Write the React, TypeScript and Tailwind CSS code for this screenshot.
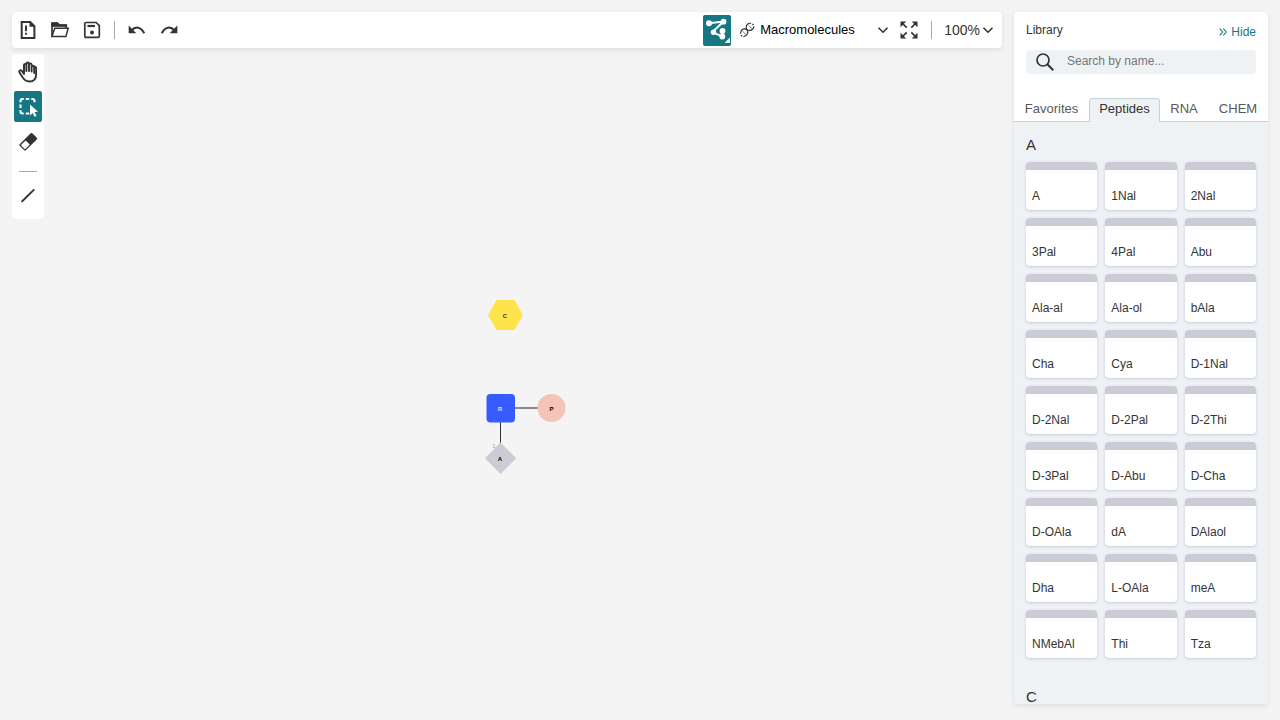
import type { ReactNode } from "react";

const peptides = [
  "A", "1Nal", "2Nal", "3Pal", "4Pal", "Abu", "Ala-al", "Ala-ol", "bAla",
  "Cha", "Cya", "D-1Nal", "D-2Nal", "D-2Pal", "D-2Thi", "D-3Pal", "D-Abu", "D-Cha",
  "D-OAla", "dA", "DAlaol", "Dha", "L-OAla", "meA", "NMebAl", "Thi", "Tza",
];

const tabs = [
  { name: "Favorites", width: "w-[75px]" },
  { name: "Peptides", width: "w-[71px]" },
  { name: "RNA", width: "w-[48px]" },
  { name: "CHEM", width: "w-[60px]" },
];

function Icon({ children, className = "size-5" }: { children: ReactNode; className?: string }) {
  return (
    <svg viewBox="0 0 20 20" className={`shrink-0 ${className}`} fill="none" stroke="currentColor" strokeWidth="1.7" aria-hidden="true">
      {children}
    </svg>
  );
}

function ToolButton({ label, active = false, children }: { label: string; active?: boolean; children: ReactNode }) {
  return (
    <button
      type="button"
      aria-label={label}
      className={`flex h-[31px] w-7 shrink-0 items-center justify-center rounded-xs ${active ? "bg-[#167782] text-white" : "text-[#333333]"}`}
    >
      {children}
    </button>
  );
}

function Chevron() {
  return (
    <svg viewBox="0 0 12 12" className="pointer-events-none size-3 shrink-0" fill="none" stroke="#333333" strokeWidth="1.6" aria-hidden="true">
      <path d="M1.5 3.7 6 8.2l4.500-4.500" />
    </svg>
  );
}

function TopBar() {
  return (
    <header className="flex h-9 items-center rounded-sm bg-white pl-0.5 pr-2 shadow-[0_2px_5px_rgba(103,104,132,0.15)]">
      <div className="flex items-center gap-1 pb-px">
        <ToolButton label="Clear canvas">
          <Icon>
            <path d="M3.700 1.900h8.500l4.200 4.300v11.900H3.700z" strokeWidth="2" />
            <path d="M11.500 1.500v5.300H17z" fill="currentColor" stroke="none" />
            <path d="M8 5.500v5.800M8 12.700v2.100" strokeWidth="1.900" />
          </Icon>
        </ToolButton>
        <ToolButton label="Open">
          <Icon>
            <path d="M2 16.300V3h5.500l1.800 2h7v3" />
            <path d="M2 3h5.500l1.800 2h7v1.300H2z" fill="currentColor" strokeWidth="1" />
            <path d="M1.900 16.600 4.700 8.300h13.500l-2.300 8.300z" strokeWidth="1.500" />
          </Icon>
        </ToolButton>
        <ToolButton label="Save">
          <Icon>
            <path d="M4 2.500h10.200l3.100 3.200v10.500q0 1.100-1.100 1.100H4q-1.200 0-1.200-1.100V3.600Q2.800 2.500 4 2.500z" strokeWidth="1.700" />
            <path d="M5.500 6h7.500" strokeWidth="2.200" />
            <circle cx="10" cy="12.500" r="2" fill="currentColor" stroke="none" />
          </Icon>
        </ToolButton>
      </div>
      <div className="mx-2 h-[18px] w-px bg-[#a8a8a8]" />
      <div className="flex items-center gap-1 pb-px">
        <ToolButton label="Undo">
          <Icon>
            <path d="M4.500 10.500c4-4.600 9.500-3.800 12.700 2.800" strokeWidth="2" />
            <path d="M1.700 5.500v7.800h7.600z" fill="currentColor" stroke="none" />
          </Icon>
        </ToolButton>
        <ToolButton label="Redo">
          <Icon>
            <path d="M15.500 10.500c-4-4.600-9.500-3.800-12.700 2.800" strokeWidth="2" />
            <path d="M18.300 5.500v7.800h-7.600z" fill="currentColor" stroke="none" />
          </Icon>
        </ToolButton>
      </div>

      <div className="ml-auto flex items-center">
        <ToolButton label="Snake layout mode" active>
          <svg viewBox="0 0 28 31" className="h-[31px] w-7" aria-hidden="true">
            <path d="M6 8.200 20.500 6.600 9.300 17.200l10.500 4.500M19.500 16v6" fill="none" stroke="white" strokeWidth="2" />
            <g fill="white">
              <circle cx="6" cy="8.200" r="3" />
              <circle cx="20.500" cy="6.700" r="2.900" />
              <circle cx="10.500" cy="17.200" r="2.700" />
              <circle cx="19.500" cy="16" r="2.900" />
              <circle cx="19.300" cy="21.500" r="2.900" />
              <path d="M27 22.500V28h-5.500z" />
            </g>
          </svg>
        </ToolButton>
        <button type="button" aria-label="Mode: Macromolecules" className="ml-2 flex h-7 w-[150px] items-center gap-1 text-left text-[13px] leading-4 text-black">
          <svg viewBox="0 0 17 18" className="h-[18px] w-[17px] shrink-0" fill="none" stroke="#333333" strokeWidth="1.200" aria-hidden="true">
            <path d="M1.800 11C2.500 8 5 7.200 8 8.700c3.200 1.500 6.100.5 6.800-2.700" />
            <path d="M8 8.700C6 5.500 7.800 2.700 10.500 2.300M8 8.700c2 3-.2 6.200-3.300 6.900" />
            <path d="M10.500 2.300c2.300-.4 4.600 1.400 4.300 3.700M1.800 11c-.6 2.400.7 4.600 2.900 4.600" strokeDasharray="1.600 1.300" />
            <path d="m9.800 4.500 3.200 3.300M4 10.500l3.200 3.200" strokeWidth="1" strokeDasharray="1.600 1" />
          </svg>
          <span className="flex-1">Macromolecules</span>
          <Chevron />
        </button>
        <button type="button" aria-label="Fullscreen" className="ml-2.5 text-[#333333]">
          <Icon>
            <path d="m3 3 4.700 4.700M17 3l-4.700 4.700M3 17l4.700-4.700M17 17l-4.700-4.700" />
            <path d="M1.500 1.500h5.700L1.500 7.200zM18.500 1.500h-5.700l5.700 5.700zM1.500 18.500h5.700l-5.700-5.700zM18.500 18.500h-5.700l5.700-5.700z" fill="currentColor" stroke="none" />
          </Icon>
        </button>
        <div className="ml-3 h-[18px] w-px bg-[#a8a8a8]" />
        <button type="button" aria-label="Zoom 100%" className="ml-3 flex items-center gap-0.5 text-sm text-[#333333]">
          100%
          <Chevron />
        </button>
      </div>
    </header>
  );
}

function LeftBar() {
  return (
    <nav aria-label="Tools" className="mt-1.5 flex h-[165px] w-8 flex-col items-center rounded-sm bg-white pt-0.5">
      <ToolButton label="Hand">
        <svg viewBox="0 0 22 24" className="h-6 w-[22px]" fill="none" stroke="currentColor" strokeWidth="1.900" strokeLinecap="round" strokeLinejoin="round" aria-hidden="true">
          <path d="M7 12V5.200q0-1.300 1.200-1.300t1.200 1.300V11M9.400 11V3.800q0-1.300 1.300-1.300T12 3.800V11M12 11V4.700q0-1.300 1.300-1.300t1.300 1.300v6.800M14.600 11.500V7q0-1.300 1.300-1.300T17.200 7M17.200 7v6" />
          <path d="M17.200 6.900q1.900-.5 1.900 1.400v6.200c0 4.500-2.700 7-6.600 7-3.700 0-5.500-1.500-7.500-5.100l-2.600-4.200q-.6-1.400.5-1.900 1.300-.5 2.200.9L7 14V5.200" />
        </svg>
      </ToolButton>
      <div className="mt-1">
        <ToolButton label="Rectangle selection" active>
          <svg viewBox="0 0 28 31" className="h-[31px] w-7" aria-hidden="true">
            <g fill="none" stroke="white" strokeWidth="2.100">
              <path d="M6.500 11.200V10q0-2 2-2h1.200M17.300 8h1.200q2 0 2 2v1.200M6.500 19.300v1.200q0 2 2 2h1.200M11.800 8h3.400M11.800 22.500h3.400M6.500 13.500v3.500" />
            </g>
            <path d="m16 13.500 8 7.200-3.500.3 2 3.700-2 1-1.900-3.700-2.600 2.500z" fill="white" />
          </svg>
        </ToolButton>
      </div>
      <div className="mt-1">
        <ToolButton label="Erase">
          <Icon>
            <path d="M12.700 1.300q.8-.8 1.600 0l4.500 4.500q.8.800 0 1.600L7.800 18.300q-.8.800-1.600 0l-4.500-4.500q-.8-.8 0-1.600z" fill="currentColor" stroke="none" />
            <path d="m7.600 8.400 4.200 4.200-4.400 4.300q-.4.400-.8 0l-3.400-3.400q-.4-.4 0-.8z" fill="white" stroke="none" />
          </Icon>
        </ToolButton>
      </div>
      <div className="mt-3.5 h-px w-[18px] bg-[#a8a8a8]" />
      <div className="mt-2">
        <ToolButton label="Single bond">
          <Icon>
            <path d="M4.200 15.300 15.800 3.900" strokeWidth="1.900" strokeLinecap="round" />
          </Icon>
        </ToolButton>
      </div>
    </nav>
  );
}

function Canvas() {
  return (
    <svg viewBox="0 0 90 190" className="absolute left-[470px] top-[244px] h-[190px] w-[90px]" fontFamily="Liberation Sans, Arial, sans-serif" fontSize="6" fontWeight="700" textAnchor="middle" role="img" aria-label="Monomers">
      <g transform="translate(-42 -2)">
        <path d="M48 25 56.500 10h18L83 25l-8.500 15h-18z" fill="#ffe34c" />
        <text x="65" y="28" fill="#333333">C</text>
        <path d="M74 118h30" stroke="#8b8989" strokeWidth="2" />
        <path d="M60.500 130v26" stroke="#333333" />
        <rect x="46.500" y="104" width="28.500" height="28.500" rx="4" fill="#365cff" />
        <text x="60" y="121" fill="#e1e6ff">R</text>
        <circle cx="111.500" cy="118" r="14" fill="#f4c5b7" />
        <text x="111.500" y="121" fill="black">P</text>
        <text x="54" y="158" fill="#a0a0a4" fontWeight="400">1</text>
        <path d="m60.500 152.500 15.700 15.700-15.700 15.700-15.700-15.700z" fill="#cccbd6" />
        <text x="60" y="171" fill="black">A</text>
      </g>
    </svg>
  );
}

function Library() {
  return (
    <aside aria-label="Library" className="flex w-[254px] shrink-0 flex-col overflow-hidden rounded-sm bg-white text-xs text-[#333333] shadow-[0_2px_5px_rgba(103,104,132,0.15)]">
      <div className="flex h-[38px] items-start justify-between px-3 pt-2.5">
        <h1>Library</h1>
        <button type="button" className="mt-0.5 flex items-center gap-1 text-[#167782]">
          <svg viewBox="0 0 8 8" className="size-2" fill="none" stroke="currentColor" strokeWidth="1.100" aria-hidden="true">
            <path d="m.7.7 3 3.300-3 3.300M4.300.7l3 3.300-3 3.300" />
          </svg>
          Hide
        </button>
      </div>
      <label className="mx-3 flex h-6 items-center rounded-sm bg-[#eff2f5] pl-[9px]">
        <Icon>
          <circle cx="8" cy="8" r="6" />
          <path d="m12.300 12.300 6 6" strokeWidth="2" />
        </Icon>
        <input type="text" aria-label="Search by name" placeholder="Search by name..." className="ml-3 min-w-0 flex-1 bg-transparent pb-0.5 outline-none placeholder:text-[#767676]" />
      </label>
      <div role="tablist" className="mt-6 flex h-6 shrink-0">
        {tabs.map(({ name, width }) => {
          const active = name === "Peptides";
          return (
            <button
              key={name}
              type="button"
              role="tab"
              aria-selected={active}
              className={`${width} shrink-0 text-[13px] leading-5 ${active ? "rounded-t-sm border border-b-0 border-[#c4cfdc] bg-[#eff2f5] pb-[3px] text-[#333333]" : "border-b border-[#c4cfdc] pb-0.5 text-[#585858]"}`}
            >
              {name}
            </button>
          );
        })}
      </div>
      <div className="min-h-0 flex-1 overflow-hidden bg-[#eff2f5] px-3 pt-3">
        <h2 className="mb-1.5 text-[15px] leading-[22px]">A</h2>
        <div className="grid grid-cols-3 gap-2">
          {peptides.map((name) => (
            <button
              key={name}
              type="button"
              className="flex h-12 items-end overflow-hidden rounded-sm border-t-8 border-[#cccbd6] bg-white px-1.5 pb-1.5 text-left shadow-[0_1px_3px_rgba(103,104,132,0.3)]"
            >
              {name}
            </button>
          ))}
        </div>
        <h2 className="mt-7 text-[15px] leading-[22px]">C</h2>
      </div>
    </aside>
  );
}

export default function App() {
  return (
    <div className="flex h-screen gap-3 overflow-hidden bg-[#f4f4f4] px-3 pb-4 pt-3 font-['Liberation_Sans',Arial,sans-serif]">
      <main className="flex min-w-0 flex-1 flex-col">
        <TopBar />
        <div className="relative flex-1">
          <LeftBar />
          <Canvas />
        </div>
      </main>
      <Library />
    </div>
  );
}
